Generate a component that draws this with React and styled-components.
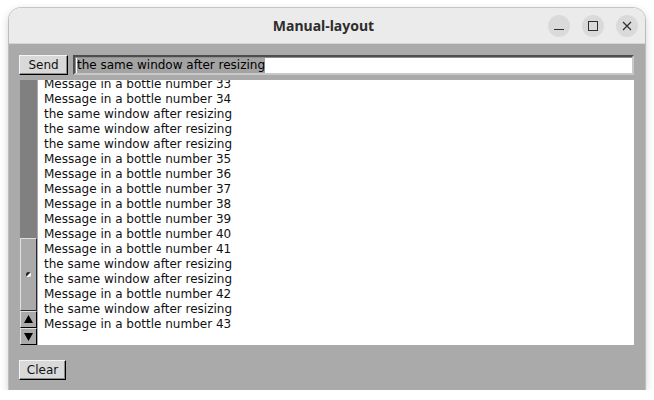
import React from "react";
import styled, { createGlobalStyle } from "styled-components";

const GlobalStyle = createGlobalStyle`
  body {
    margin: 0;
    background: #ffffff;
    font-family: "DejaVu Sans", sans-serif;
  }
`;

const Window = styled.div`
  margin: 8px 0 0 9px;
  width: 636px;
  height: 382px;
  display: flex;
  flex-direction: column;
  border-radius: 12px 12px 0 0;
  overflow: hidden;
  box-shadow: 0 0 0 1px rgba(0, 0, 0, 0.18), 0 3px 10px rgba(0, 0, 0, 0.22);
`;

const TitleBar = styled.div`
  height: 35px;
  flex: none;
  display: grid;
  grid-template-columns: 1fr auto 1fr;
  align-items: center;
  padding: 0 7px 0 0;
  background: #ebebeb;
  border-bottom: 1px solid #d4d4d4;
`;

const Title = styled.div`
  grid-column: 2;
  font-family: "Noto Sans", "Open Sans", sans-serif;
  font-weight: 700;
  font-size: 14px;
  color: #2d2d2d;
`;

const Controls = styled.div`
  grid-column: 3;
  justify-self: end;
  display: flex;
  gap: 12px;
`;

const ControlButton = styled.div`
  width: 22px;
  height: 22px;
  border-radius: 50%;
  background: #dadada;
  display: flex;
  align-items: center;
  justify-content: center;
  color: #2e2e2e;
`;

const Body = styled.div`
  flex: 1;
  background: #aaaaaa;
  display: flex;
  flex-direction: column;
  padding: 11px 11px 0 10px;
`;

const TopRow = styled.div`
  display: flex;
  gap: 5px;
  height: 20px;
`;

const TkButton = styled.div`
  box-sizing: border-box;
  height: 20px;
  width: ${(p) => p.width}px;
  display: flex;
  align-items: center;
  justify-content: center;
  background: #d9d9d9;
  border: 1px solid;
  border-color: #f4f4f4 #000 #000 #f4f4f4;
  box-shadow: inset -1px -1px 0 #8a8a8a;
  font-size: 12px;
  color: #111;
`;

const Entry = styled.div`
  box-sizing: border-box;
  flex: 1;
  height: 20px;
  background: #ffffff;
  border: 2px solid;
  border-color: #4d4d4d #c8c8c8 #c8c8c8 #4d4d4d;
  box-shadow: inset 1px 1px 0 #8f8f8f;
  padding: 0 0 0 2px;
  display: flex;
  align-items: center;
  font-size: 12px;
  color: #000;
`;

const Selected = styled.span`
  background: #a3a3a3;
  line-height: 15px;
`;

const Main = styled.div`
  margin-top: 5px;
  height: 265px;
  display: flex;
  gap: 1px;
`;

const Scrollbar = styled.div`
  width: 17px;
  margin-left: 1px;
  display: flex;
  flex-direction: column;
  background: #808080;
`;

const Trough = styled.div`
  flex: 1;
`;

const Slider = styled.div`
  box-sizing: border-box;
  height: 73px;
  background: #aaaaaa;
  border: 1px solid;
  border-color: #e0e0e0 #2a2a2a #2a2a2a #e0e0e0;
  display: flex;
  align-items: center;
  justify-content: center;
`;

const Grip = styled.div`
  width: 5px;
  height: 5px;
  border-radius: 50%;
  background: linear-gradient(135deg, #222 45%, #fff 55%);
`;

const ArrowButton = styled.div`
  box-sizing: border-box;
  height: 17px;
  background: #aaaaaa;
  border: 1px solid;
  border-color: #e0e0e0 #000 #000 #e0e0e0;
  display: flex;
  align-items: center;
  justify-content: center;
`;

const TextArea = styled.div`
  flex: 1;
  background: #ffffff;
  overflow: hidden;
  padding-left: 6px;
`;

const Lines = styled.div`
  margin-top: -3px;
  font-size: 12px;
  line-height: 15px;
  color: #111;
  white-space: pre;
`;

const BottomRow = styled.div`
  margin-top: 15px;
  display: flex;
`;

const lines = [
  "Message in a bottle number 33",
  "Message in a bottle number 34",
  "the same window after resizing",
  "the same window after resizing",
  "the same window after resizing",
  "Message in a bottle number 35",
  "Message in a bottle number 36",
  "Message in a bottle number 37",
  "Message in a bottle number 38",
  "Message in a bottle number 39",
  "Message in a bottle number 40",
  "Message in a bottle number 41",
  "the same window after resizing",
  "the same window after resizing",
  "Message in a bottle number 42",
  "the same window after resizing",
  "Message in a bottle number 43",
];

const Triangle = ({ down }) => (
  <svg width="11" height="11" viewBox="0 0 11 11">
    <polygon
      points={down ? "1,2 10,2 5.5,10" : "1,9 10,9 5.5,1"}
      fill="#000"
    />
  </svg>
);

export default function App() {
  return (
    <>
      <GlobalStyle />
      <Window>
        <TitleBar>
          <Title>Manual-layout</Title>
          <Controls>
            <ControlButton>
              <svg width="10" height="10" viewBox="0 0 10 10">
                <line x1="0" y1="8.5" x2="10" y2="8.5" stroke="currentColor" strokeWidth="1" />
              </svg>
            </ControlButton>
            <ControlButton>
              <svg width="10" height="10" viewBox="0 0 10 10">
                <rect x="0.5" y="0.5" width="9" height="9" fill="none" stroke="currentColor" strokeWidth="1" />
              </svg>
            </ControlButton>
            <ControlButton>
              <svg width="10" height="10" viewBox="0 0 10 10">
                <path d="M1 1 L9 9 M9 1 L1 9" stroke="currentColor" strokeWidth="1.2" />
              </svg>
            </ControlButton>
          </Controls>
        </TitleBar>
        <Body>
          <TopRow>
            <TkButton width={49}>Send</TkButton>
            <Entry>
              <Selected>the same window after resizing</Selected>
            </Entry>
          </TopRow>
          <Main>
            <Scrollbar>
              <Trough />
              <Slider>
                <Grip />
              </Slider>
              <ArrowButton>
                <Triangle />
              </ArrowButton>
              <ArrowButton>
                <Triangle down />
              </ArrowButton>
            </Scrollbar>
            <TextArea>
              <Lines>
                {lines.map((line, i) => (
                  <div key={i}>{line}</div>
                ))}
              </Lines>
            </TextArea>
          </Main>
          <BottomRow>
            <TkButton width={47}>Clear</TkButton>
          </BottomRow>
        </Body>
      </Window>
    </>
  );
}
